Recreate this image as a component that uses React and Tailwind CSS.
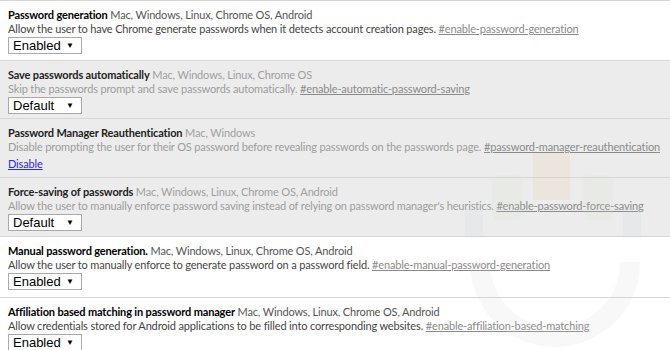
import React from "react";

const font = { fontFamily: 'Lato, "Noto Sans", sans-serif' };

function Select({ value }) {
  return (
    <div className="mt-[1px] flex h-[17px] w-[74px] items-center justify-between border border-[#a9a9a9] bg-white pl-[4px] pr-[7px] text-[13px] leading-none text-black" style={{ fontFamily: '"Liberation Sans", Arial, sans-serif' }}>
      <span>{value}</span>
      <span className="text-[8px]">▼</span>
    </div>
  );
}

function Row({ title, os, desc, tag, control, gray, h }) {
  return (
    <div className={`border-b border-[#d6d6d6] pl-[8px] pt-[7px] ${gray ? "bg-[#ececec]" : "bg-white"} ${h}`}>
      <div className="whitespace-nowrap text-[11px] leading-[14px] tracking-[-0.15px]">
        <span className={`font-bold ${gray ? "text-[#222]" : "text-black"}`}>{title}</span>{" "}
        <span className={gray ? "text-[#a0a0a0]" : "text-[#555]"}>{os}</span>
      </div>
      <div className={`whitespace-nowrap text-[11px] leading-[14px] tracking-[-0.15px] ${gray ? "text-[#9c9c9c]" : "text-[#444]"}`}>
        {desc}{" "}
        <span className="text-[#8a8a8a] underline">{tag}</span>
      </div>
      {control}
    </div>
  );
}

export default function App() {
  return (
    <div className="relative h-[350px] w-[670px] overflow-hidden bg-white" style={font}>
      <div className="border-t border-[#d6d6d6]">
        <Row
          h="h-[60px]"
          title="Password generation"
          os="Mac, Windows, Linux, Chrome OS, Android"
          desc="Allow the user to have Chrome generate passwords when it detects account creation pages."
          tag="#enable-password-generation"
          control={<Select value="Enabled" />}
        />
        <Row
          gray
          h="h-[58px]"
          title="Save passwords automatically"
          os="Mac, Windows, Linux, Chrome OS"
          desc="Skip the passwords prompt and save passwords automatically."
          tag="#enable-automatic-password-saving"
          control={<Select value="Default" />}
        />
        <Row
          gray
          h="h-[59px]"
          title="Password Manager Reauthentication"
          os="Mac, Windows"
          desc="Disable prompting the user for their OS password before revealing passwords on the passwords page."
          tag="#password-manager-reauthentication"
          control={<div className="mt-[3px] text-[11px] leading-[14px] tracking-[-0.15px] text-[#2a2ad8] underline">Disable</div>}
        />
        <Row
          gray
          h="h-[59px]"
          title="Force-saving of passwords"
          os="Mac, Windows, Linux, Chrome OS, Android"
          desc="Allow the user to manually enforce password saving instead of relying on password manager's heuristics."
          tag="#enable-password-force-saving"
          control={<Select value="Default" />}
        />
        <Row
          h="h-[61px]"
          title="Manual password generation."
          os="Mac, Windows, Linux, Chrome OS, Android"
          desc="Allow the user to manually enforce to generate password on a password field."
          tag="#enable-manual-password-generation"
          control={<Select value="Enabled" />}
        />
        <Row
          h="h-[60px]"
          title="Affiliation based matching in password manager"
          os="Mac, Windows, Linux, Chrome OS, Android"
          desc="Allow credentials stored for Android applications to be filled into corresponding websites."
          tag="#enable-affiliation-based-matching"
          control={<Select value="Enabled" />}
        />
      </div>
      <svg className="pointer-events-none absolute left-0 top-0" width="670" height="350" viewBox="0 0 670 350">
        <g opacity="0.15">
          <rect x="492" y="175" width="31" height="45" rx="8" fill="#cfe0c2" />
          <rect x="583" y="175" width="30" height="45" rx="8" fill="#cfe0c2" />
          <rect x="533" y="153" width="37" height="47" fill="#f2c48e" />
          <rect x="465" y="208" width="18" height="30" fill="#c5d3dc" />
          <rect x="623" y="208" width="18" height="30" fill="#c5d3dc" />
          <path d="M 480 262 A 75 75 0 0 0 630 262" fill="none" stroke="#d0d0d0" strokeWidth="20" />
        </g>
      </svg>
    </div>
  );
}
